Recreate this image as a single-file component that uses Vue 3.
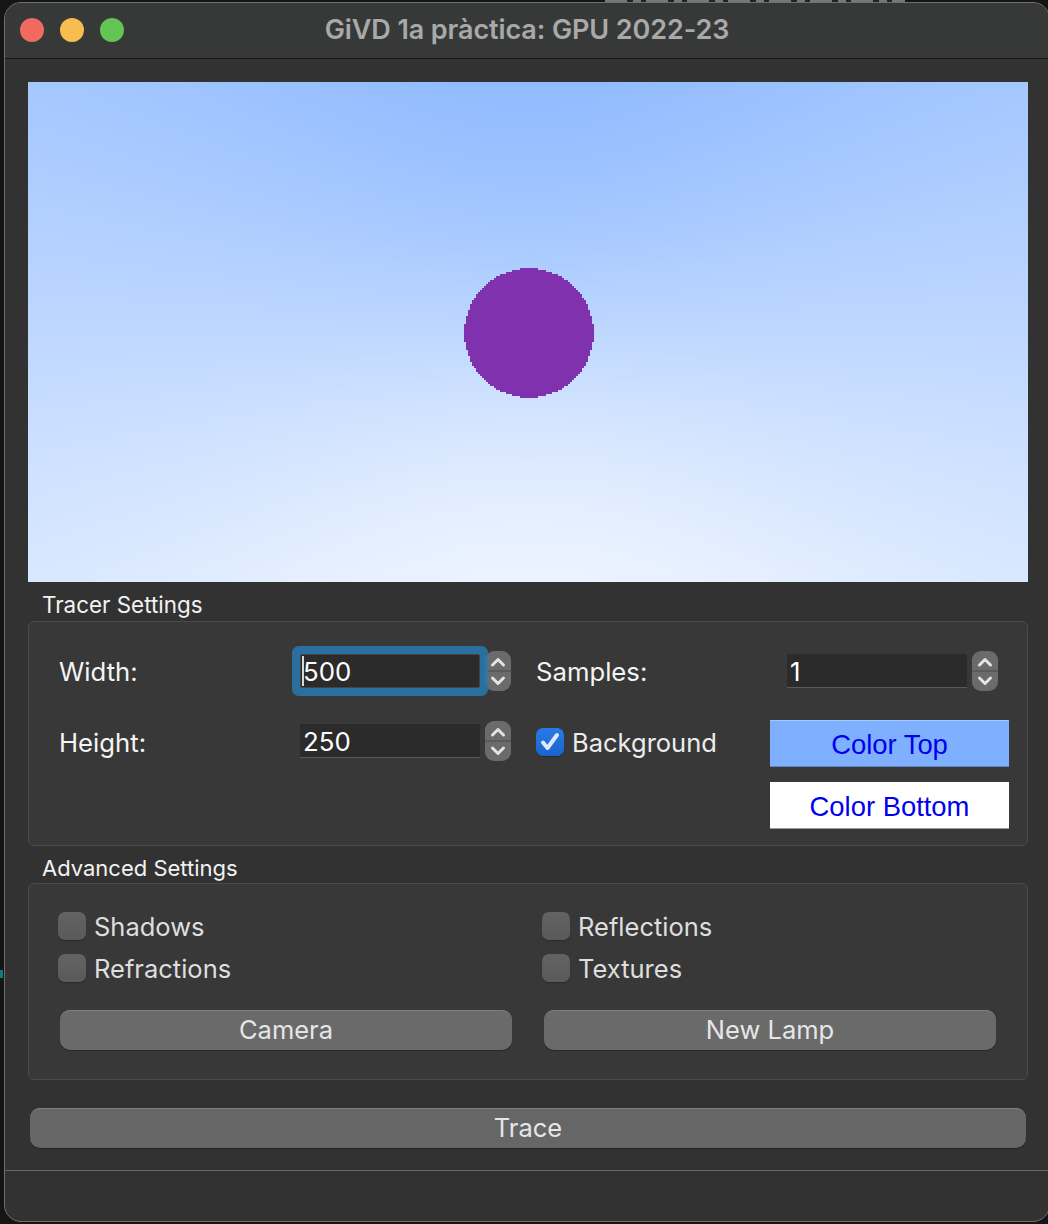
<script setup>
import { ref, onMounted } from 'vue'

const view = ref(null)

// same little ray tracer as the app: 500x250 buffer, shown at twice the size
const top = [127, 176, 255]
const bottom = [255, 255, 255]
const sphere = [127, 49, 174]

const drawScene = () => {
  const ctx = view.value.getContext('2d')
  const img = ctx.createImageData(500, 250)
  for (let j = 0; j < 250; j++) {
    for (let i = 0; i < 500; i++) {
      const x = (i - 250) / 125
      const y = (125 - j) / 125
      const len = Math.sqrt(x * x + y * y + 1)
      const b = 1 / len
      const disc = b * b - (1 - 0.0625)
      let c
      if (disc >= 0) {
        c = sphere
      } else {
        const t = 0.5 * (y / len + 1)
        c = [0, 1, 2].map(k => bottom[k] * (1 - t) + top[k] * t)
      }
      const p = (j * 500 + i) * 4
      img.data[p] = c[0]
      img.data[p + 1] = c[1]
      img.data[p + 2] = c[2]
      img.data[p + 3] = 255
    }
  }
  ctx.putImageData(img, 0, 0)
}

onMounted(drawScene)
</script>

<template>
  <div class="desk">
    <div class="behind"></div>
    <div class="behind-speck"></div>
    <main class="window">
      <header class="titlebar">
        <div class="lights">
          <span class="light red"></span>
          <span class="light yellow"></span>
          <span class="light green"></span>
        </div>
        <h1>GiVD 1a pràctica: GPU 2022-23</h1>
      </header>

      <section class="content">
        <canvas ref="view" class="view" width="500" height="250"></canvas>

        <h2 class="group-title first">Tracer Settings</h2>
        <div class="group tracer">
          <label class="field-label width-label">Width:</label>
          <div class="spin width-spin">
            <div class="field focused"><i class="caret"></i>500</div>
            <div class="stepper">
              <svg viewBox="0 0 26 40" width="26" height="40">
                <path d="M0 20H26" stroke="#555" stroke-width="1.5" />
                <path d="M7.5 14L13 8.5 18.5 14M7.5 27L13 32.5 18.5 27" fill="none" stroke="#e4e4e4" stroke-width="3" stroke-linecap="round" stroke-linejoin="round" />
              </svg>
            </div>
          </div>

          <label class="field-label samples-label">Samples:</label>
          <div class="spin samples-spin">
            <div class="field">1</div>
            <div class="stepper">
              <svg viewBox="0 0 26 40" width="26" height="40">
                <path d="M0 20H26" stroke="#555" stroke-width="1.5" />
                <path d="M7.5 14L13 8.5 18.5 14M7.5 27L13 32.5 18.5 27" fill="none" stroke="#e4e4e4" stroke-width="3" stroke-linecap="round" stroke-linejoin="round" />
              </svg>
            </div>
          </div>

          <label class="field-label height-label">Height:</label>
          <div class="spin height-spin">
            <div class="field">250</div>
            <div class="stepper">
              <svg viewBox="0 0 26 40" width="26" height="40">
                <path d="M0 20H26" stroke="#555" stroke-width="1.5" />
                <path d="M7.5 14L13 8.5 18.5 14M7.5 27L13 32.5 18.5 27" fill="none" stroke="#e4e4e4" stroke-width="3" stroke-linecap="round" stroke-linejoin="round" />
              </svg>
            </div>
          </div>

          <div class="check-row bg-check">
            <span class="box on">
              <svg viewBox="0 0 28 28" width="28" height="28">
                <path d="M7 14.5l4.5 5.5 9.5-13" fill="none" stroke="#dfe9fb" stroke-width="4" stroke-linecap="round" stroke-linejoin="round" />
              </svg>
            </span>
            <span class="check-text">Background</span>
          </div>

          <button class="swatch swatch-top">Color Top</button>
          <button class="swatch swatch-bottom">Color Bottom</button>
        </div>

        <h2 class="group-title second">Advanced Settings</h2>
        <div class="group advanced">
          <div class="checks">
            <div class="check-row"><span class="box"></span><span class="check-text">Shadows</span></div>
            <div class="check-row"><span class="box"></span><span class="check-text">Reflections</span></div>
            <div class="check-row"><span class="box"></span><span class="check-text">Refractions</span></div>
            <div class="check-row"><span class="box"></span><span class="check-text">Textures</span></div>
          </div>
          <div class="actions">
            <button class="push">Camera</button>
            <button class="push">New Lamp</button>
          </div>
        </div>

        <button class="push trace">Trace</button>
      </section>

      <footer class="statusbar"></footer>
    </main>
  </div>
</template>

<style>
html,
body {
  margin: 0;
  background: #161716;
}
</style>

<style scoped>
* {
  box-sizing: border-box;
}
.desk {
  position: relative;
  width: 1048px;
  height: 1224px;
  padding: 2px 0 2px 4px;
  overflow: hidden;
  background: #141514;
  font-family: Inter, "Liberation Sans", sans-serif;
}
.behind {
  position: absolute;
  left: 605px;
  top: 0;
  width: 300px;
  height: 2px;
  background: repeating-linear-gradient(90deg, #777 0 22px, #222 22px 28px, #777 28px 36px, #222 36px 41px);
}
.behind-speck {
  position: absolute;
  left: 0;
  top: 970px;
  width: 3px;
  height: 8px;
  background: #0f7c80;
}
.window {
  display: flex;
  flex-direction: column;
  width: 1046px;
  height: 1220px;
  border: 1px solid #6f6f6f;
  border-radius: 17px;
  background: #323232;
  overflow: hidden;
}
.titlebar {
  position: relative;
  display: flex;
  align-items: center;
  justify-content: center;
  flex: none;
  height: 56px;
  padding-bottom: 2px;
  background: #373938;
  border-bottom: 1px solid #141414;
}
.titlebar h1 {
  margin: 0;
  font-size: 27px;
  font-weight: 600;
  letter-spacing: -0.1px;
  color: #a9a9a9;
}
.lights {
  position: absolute;
  left: 15px;
  top: 15px;
  display: flex;
  gap: 16px;
}
.light {
  width: 24px;
  height: 24px;
  border-radius: 50%;
}
.red { background: #f06a60; }
.yellow { background: #f8bd4f; }
.green { background: #62c554; }

.content {
  flex: none;
  height: 1111px;
  padding: 23px 0 0 23px;
}
.view {
  display: block;
  width: 1000px;
  height: 500px;
  image-rendering: pixelated;
}
.group-title {
  margin: 0;
  padding-left: 14px;
  font-weight: 400;
  line-height: 26px;
  color: #f2f2f2;
}
.group-title.first {
  padding-top: 10px;
  height: 39px;
  font-size: 22.4px;
}
.group-title.second {
  padding-top: 9px;
  height: 37px;
  font-size: 22px;
}
.group {
  width: 1000px;
  background: #383838;
  border: 1px solid #4b4b4b;
  border-radius: 6px;
}
.tracer {
  display: grid;
  height: 225px;
  padding: 29px 0 0 30px;
  grid-template-columns: 241px 212px 24px 234px 17px 211px 11px;
  grid-template-rows: 40px 29px 47px 15px 47px;
}
.field-label {
  display: flex;
  align-items: center;
  font-size: 25.7px;
  color: #f4f4f4;
}
.width-label { grid-column: 1; grid-row: 1; }
.width-spin { grid-column: 2; grid-row: 1; }
.samples-label { grid-column: 4 / 6; grid-row: 1; }
.samples-spin { grid-column: 6; grid-row: 1; }
.height-label { grid-column: 1; grid-row: 3; height: 44px; }
.height-spin { grid-column: 2; grid-row: 3; margin-top: 1px; }
.bg-check { grid-column: 4; grid-row: 3; align-self: start; margin-top: 8px; }

.spin {
  display: flex;
  align-items: center;
  gap: 5px;
  height: 40px;
}
.field {
  position: relative;
  display: flex;
  align-items: center;
  width: 180px;
  height: 34px;
  padding: 2px 0 0 3px;
  background: #2b2b2b;
  border-bottom: 1px solid #5a5a5a;
  font-size: 25.8px;
  color: #fff;
}
.field.focused {
  z-index: 1;
  padding: 0 0 0 2px;
  border: 1px solid #444;
  border-radius: 2px;
  box-shadow: 0 0 0 8px rgba(40, 121, 176, 0.85);
}
.caret {
  position: absolute;
  left: 1px;
  top: 1px;
  width: 2px;
  height: 30px;
  background: #d8d8d8;
}
.stepper {
  flex: none;
  width: 26px;
  height: 40px;
  border-radius: 9px;
  background: #6b6b6b;
  overflow: hidden;
}
.stepper svg {
  display: block;
}

.check-row {
  display: flex;
  align-items: center;
  gap: 8px;
  height: 28px;
}
.bg-check .check-text {
  color: #ececec;
}
.box {
  flex: none;
  width: 28px;
  height: 28px;
  border-radius: 7px;
  background: linear-gradient(#636363, #5a5a5a);
  box-shadow: 0 1px 1px rgba(0, 0, 0, 0.25);
}
.box.on {
  background: linear-gradient(#2a7ae6, #1a64cc);
}
.box svg {
  display: block;
}
.check-text {
  padding-top: 1px;
  font-size: 25.5px;
  color: #dedede;
}

.swatch {
  border: none;
  padding: 3px 0 0;
  font-family: "Liberation Sans", Arial, sans-serif;
  font-size: 27.4px;
  color: #0000f0;
}
.swatch-top {
  grid-column: 5 / 8;
  grid-row: 3;
  background: #7fb0ff;
  box-shadow: inset 0 1px 0 #a3c6ff, inset 0 -1px 0 #5f86c4;
}
.swatch-bottom {
  grid-column: 5 / 8;
  grid-row: 5;
  background: #fff;
  box-shadow: inset 0 -1px 0 #999;
}

.advanced {
  height: 197px;
  padding: 28px 0 0 29px;
}
.checks {
  display: grid;
  grid-template-columns: 484px 1fr;
  row-gap: 14px;
}
.actions {
  display: flex;
  gap: 32px;
  margin: 28px 0 0 2px;
}
.push {
  width: 452px;
  height: 40px;
  padding: 0 0 2px;
  border: none;
  border-radius: 10px;
  background: #6a6a6a;
  box-shadow: inset 0 1px 0 #7e7e7e, 0 1px 1px rgba(0, 0, 0, 0.3);
  font-family: inherit;
  font-size: 25.5px;
  color: #e6e6e6;
}
.trace {
  display: block;
  width: 996px;
  margin: 28px 0 0 2px;
  background: #666;
}

.statusbar {
  flex: 1;
  border-top: 1px solid #666;
}
</style>
